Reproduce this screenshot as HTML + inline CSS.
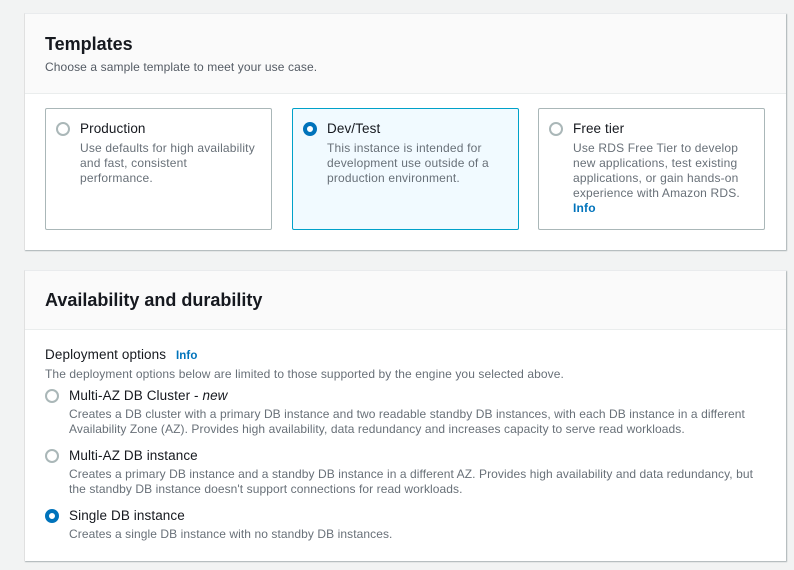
<!DOCTYPE html>
<html><head><style>
*{margin:0;padding:0;box-sizing:border-box}
body{width:794px;height:570px;background:#f2f3f3;font-family:"Liberation Sans",sans-serif;position:relative;overflow:hidden;color:#16191f}
.panel{position:absolute;left:24px;width:762px;background:#fff;border-left:1px solid #e0e0e0;border-top:1px solid #e9ebed;box-shadow:1px 1px 1px 0 rgba(0,28,36,.3)}
.hdr{background:#fafafa;border-bottom:1px solid #eaeded;position:relative}
.abs{position:absolute;white-space:nowrap}
h2{font-size:18px;font-weight:bold;position:absolute;left:20px}
.sub{font-size:12px;color:#545b64;letter-spacing:.1px}
.card{position:absolute;top:108px;width:227px;height:122px;border:1px solid #aab7b8;border-radius:2px;background:#fff}
.card.sel{border-color:#00a1c9;background:#f1faff}
.r{position:absolute;width:14px;height:14px;border:2px solid #aab7b8;border-radius:50%;background:#fff}
.r.on{border:4px solid #0073bb}
.t{position:absolute;font-size:13.5px;color:#16191f;white-space:nowrap;letter-spacing:.1px}
.d{position:absolute;font-size:12px;line-height:15px;color:#687078;white-space:nowrap;letter-spacing:.08px}
.card .d{letter-spacing:.18px}
.info{color:#0073bb;font-weight:bold}
</style></head><body>
<div class="panel" style="top:13px;height:237px">
 <div class="hdr" style="height:80px">
  <h2 style="top:20px">Templates</h2>
  <div class="abs sub" style="left:20px;top:46px">Choose a sample template to meet your use case.</div>
 </div>
</div>
<div class="card" style="left:45px"><div class="r" style="left:10px;top:13px"></div><div class="t" style="left:34px;top:12px">Production</div><div class="d" style="left:34px;top:32px">Use defaults for high availability<br>and fast, consistent<br>performance.</div></div>
<div class="card sel" style="left:292px"><div class="r on" style="left:10px;top:13px"></div><div class="t" style="left:34px;top:12px">Dev/Test</div><div class="d" style="left:34px;top:32px">This instance is intended for<br>development use outside of a<br>production environment.</div></div>
<div class="card" style="left:538px"><div class="r" style="left:10px;top:13px"></div><div class="t" style="left:34px;top:12px">Free tier</div><div class="d" style="left:34px;top:32px">Use RDS Free Tier to develop<br>new applications, test existing<br>applications, or gain hands-on<br>experience with Amazon RDS.<br><span class="info">Info</span></div></div>

<div class="panel" style="top:270px;height:291px">
 <div class="hdr" style="height:59px">
  <h2 style="top:19px">Availability and durability</h2>
 </div>
</div>
<div class="abs" style="left:45px;top:347px;font-size:13.5px;letter-spacing:.1px">Deployment options <span class="info" style="font-size:11.5px;margin-left:6px">Info</span></div>
<div class="abs sub" style="left:45px;top:367px;color:#687078">The deployment options below are limited to those supported by the engine you selected above.</div>
<div class="r" style="left:45px;top:389px"></div>
<div class="t" style="left:69px;top:388px">Multi-AZ DB Cluster - <i>new</i></div>
<div class="d" style="left:69px;top:407px">Creates a DB cluster with a primary DB instance and two readable standby DB instances, with each DB instance in a different<br>Availability Zone (AZ). Provides high availability, data redundancy and increases capacity to serve read workloads.</div>
<div class="r" style="left:45px;top:449px"></div>
<div class="t" style="left:69px;top:448px">Multi-AZ DB instance</div>
<div class="d" style="left:69px;top:467px">Creates a primary DB instance and a standby DB instance in a different AZ. Provides high availability and data redundancy, but<br>the standby DB instance doesn't support connections for read workloads.</div>
<div class="r on" style="left:45px;top:509px"></div>
<div class="t" style="left:69px;top:508px">Single DB instance</div>
<div class="d" style="left:69px;top:527px">Creates a single DB instance with no standby DB instances.</div>
</body></html>
